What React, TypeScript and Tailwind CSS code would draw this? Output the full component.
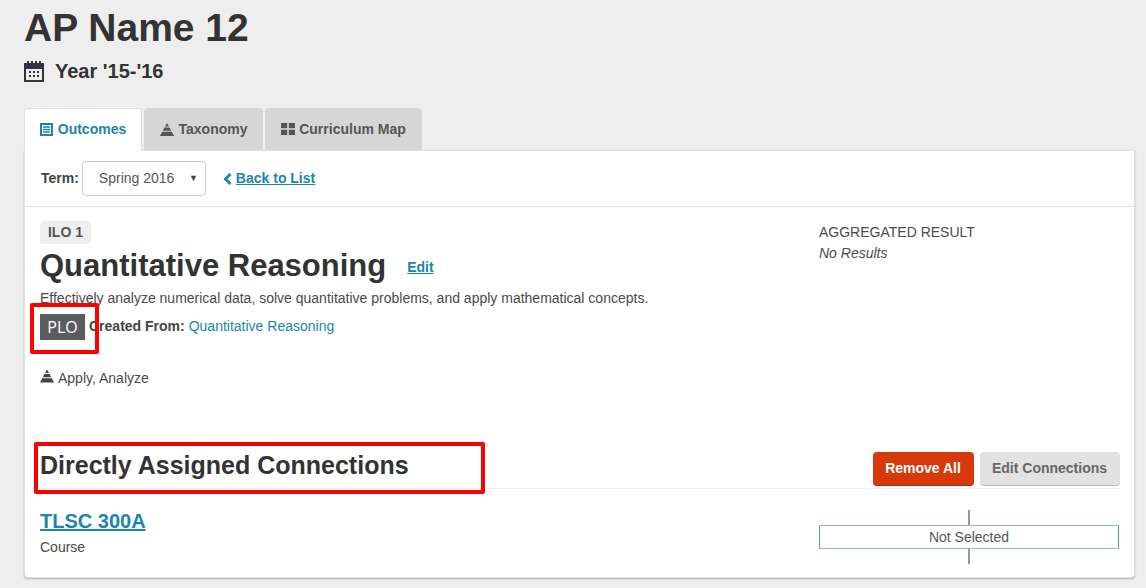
import React from "react";

const Pyramid = ({ className }: { className: string }) => (
  <svg viewBox="0 0 14 13" className={className} fill="currentColor">
    <path d="M7 0 L9 3.6 H5 Z" />
    <path d="M4.4 4.6 H9.6 L11.2 7.8 H2.8 Z" />
    <path d="M2.2 8.8 H11.8 L14 13 H0 Z" />
  </svg>
);

export default function App() {
  return (
    <div className="relative h-[588px] w-[1146px] overflow-hidden bg-[#eeeeee] pl-6 pr-[11px] font-['Liberation_Sans',Arial,sans-serif] text-[#333333]">
      <h1 className="pt-[6px] text-[39px] font-bold leading-[44px]">AP Name 12</h1>
      <div className="mt-[6px] flex h-[30px] items-center text-[20px] font-bold leading-[30px]">
        <svg viewBox="0 0 20 21" className="mr-[11px] h-[21px] w-5 text-[#333344]" fill="currentColor">
          <path fillRule="evenodd" d="M0 2h3V0h2v2h2V0h2v2h2V0h2v2h2V0h2v2h3v19H0V2zm2 6v11h16V8H2z" />
          <rect x="5" y="10" width="2" height="2" /><rect x="9" y="10" width="2" height="2" /><rect x="13" y="10" width="2" height="2" />
          <rect x="5" y="14" width="2" height="2" /><rect x="9" y="14" width="2" height="2" /><rect x="13" y="14" width="2" height="2" />
        </svg>
        <span>Year '15-'16</span>
      </div>

      <div className="mt-[22px] flex h-[42px] items-end gap-[2px] text-[14px] font-bold">
        <div className="relative z-10 -mb-px flex h-[43px] w-[118px] items-center justify-center gap-[5px] rounded-t-[4px] border border-b-0 border-[#e0e0e0] bg-white pb-px text-[#2184ab]">
          <svg viewBox="0 0 13 13" className="h-[13px] w-[13px]" fill="none" stroke="currentColor">
            <rect x="1" y="1" width="11" height="11" strokeWidth="2" />
            <path d="M3 4h7M3 6.5h7M3 9h7" strokeWidth="1.3" />
          </svg>
          Outcomes
        </div>
        <div className="flex h-[42px] w-[119px] items-center justify-center gap-[5px] rounded-t-[4px] bg-[#d6d6d6] text-[#555555]">
          <Pyramid className="h-[13px] w-[14px]" />
          Taxonomy
        </div>
        <div className="flex h-[42px] w-[157px] items-center justify-center gap-[4px] rounded-t-[4px] bg-[#d6d6d6] text-[#555555]">
          <svg viewBox="0 0 14 12" className="h-[12px] w-[14px]" fill="currentColor">
            <rect width="6.2" height="5.2" /><rect x="7.8" width="6.2" height="5.2" />
            <rect y="6.8" width="6.2" height="5.2" /><rect x="7.8" y="6.8" width="6.2" height="5.2" />
          </svg>
          Curriculum Map
        </div>
      </div>

      <div className="h-[428px] w-[1111px] rounded-b-[4px] border border-[#e0e0e0] bg-white shadow-[0_1px_2px_rgba(0,0,0,0.25)]">
        <div className="flex h-[56px] items-center border-b border-[#dddddd] pl-4">
          <span className="text-[14px] font-bold text-[#444444]">Term:</span>
          <div className="ml-[3px] flex h-[35px] w-[124px] items-center justify-between rounded-[4px] border border-[#cccccc] pl-4 pr-[7px] text-[14px] text-[#555555]">
            Spring 2016
            <span className="text-[9px] leading-none text-[#444444]">▼</span>
          </div>
          <a className="ml-[17px] flex items-center text-[14px] font-bold text-[#2184ab]">
            <svg viewBox="0 0 9 12" className="mr-[4px] h-[12px] w-[9px]" fill="none" stroke="currentColor" strokeWidth="3">
              <path d="M7.5 1 L2.5 6 L7.5 11" />
            </svg>
            <span className="underline">Back to List</span>
          </a>
        </div>

        <div className="flex h-[222px] pl-[15px] pt-[14px]">
          <div className="w-[779px]">
            <span className="flex h-[23px] w-[51px] items-center justify-center rounded-[4px] bg-[#eeeeee] text-[14px] font-bold text-[#555555]">ILO 1</span>
            <div className="mt-[4px] flex h-[36px] items-center">
              <h2 className="text-[31px] font-bold leading-[36px]">Quantitative Reasoning</h2>
              <a className="ml-[21px] mt-[2px] text-[14px] font-bold text-[#2184ab] underline">Edit</a>
            </div>
            <p className="mt-[4px] text-[14px] leading-[20px] text-[#4a4a4a]">Effectively analyze numerical data, solve quantitative problems, and apply mathematical concepts.</p>
            <div className="mt-[6px] flex h-[26px] items-center">
              <span className="flex h-[26px] w-[45px] items-center justify-center bg-[#5a5d60] font-['Open_Sans',sans-serif] text-[16px] font-normal text-white">PLO</span>
              <span className="mb-[2px] ml-[4px] text-[14px] font-bold text-[#444444]">Created From:</span>
              <a className="mb-[2px] ml-[4px] text-[14px] text-[#2184ab]">Quantitative Reasoning</a>
            </div>
            <div className="mt-[28px] flex h-[20px] items-center text-[14px] text-[#4a4a4a]">
              <Pyramid className="mb-[5px] mr-[4px] h-[14px] w-[14px] text-[#444444]" />
              Apply, Analyze
            </div>
          </div>
          <div className="pt-[1px] text-[14px] leading-[21px] text-[#4a4a4a]">
            <div>AGGREGATED RESULT</div>
            <div className="italic">No Results</div>
          </div>
        </div>

        <div className="mx-[15px] flex h-[60px] items-start justify-between border-b border-[#eeeeee]">
          <h3 className="mt-[14px] text-[25px] font-bold leading-[44px]">Directly Assigned Connections</h3>
          <div className="-mr-px flex gap-[6px] pt-[23px]">
            <button className="h-[34px] w-[101px] rounded-[4px] border-b border-[#a83208] bg-[#d63a0b] pr-px text-[14px] font-bold text-white">Remove All</button>
            <button className="h-[34px] w-[140px] rounded-[4px] border-b border-[#bbbbbb] bg-[#e2e2e2] pr-px text-[14px] font-bold text-[#666666]">Edit Connections</button>
          </div>
        </div>

        <div className="flex justify-between px-[15px]">
          <div className="pt-[18px]">
            <a className="block text-[20px] font-bold leading-[28px] text-[#2184ab] underline">TLSC 300A</a>
            <div className="mt-[2px] text-[14px] leading-[20px] text-[#4a4a4a]">Course</div>
          </div>
          <div className="flex w-[300px] flex-col items-center pt-[21px]">
            <div className="h-[15px] w-[2px] bg-[#999999]" />
            <div className="h-[24px] w-full border border-[#86cf8f] border-l-[#4cb050] border-r-[#4cb050] text-center text-[14px] leading-[22px] text-[#555555]">Not Selected</div>
            <div className="h-[15px] w-[2px] bg-[#999999]" />
          </div>
        </div>
      </div>

      <div className="pointer-events-none absolute left-[30px] top-[303px] h-[51px] w-[69px] rounded-[2px] border-[4px] border-[#ff0000]" />
      <div className="pointer-events-none absolute left-[34px] top-[442px] h-[52px] w-[451px] rounded-[2px] border-[4px] border-[#ff0000]" />
    </div>
  );
}
